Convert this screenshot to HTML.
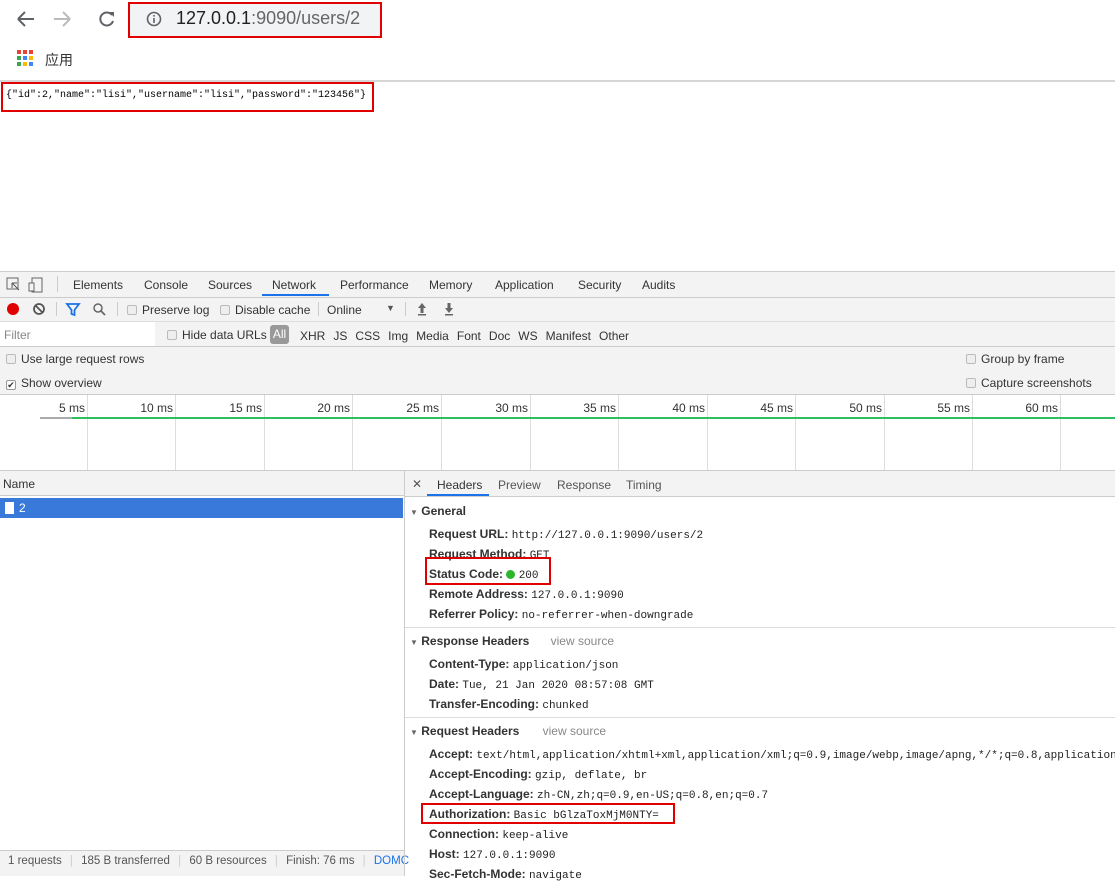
<!DOCTYPE html>
<html><head><meta charset="utf-8"><style>
*{margin:0;padding:0;box-sizing:border-box}
body{width:1115px;height:876px;overflow:hidden;background:#fff;font-family:"Liberation Sans","Noto Sans CJK SC",sans-serif;font-size:12px;color:#333;position:relative}
.a{position:absolute;white-space:nowrap}
.m{font-family:"Liberation Mono",monospace;font-size:11px;color:#222}
.b{font-weight:bold;color:#333}
.hl{border:2px solid #e00000}
.cb{display:inline-block;width:10px;height:10px;border:1px solid #bbb;background:#eee;border-radius:2px;vertical-align:-1px;margin-right:5px}
.vl{position:absolute;width:1px;background:#ddd}
.hr{position:absolute;height:1px;background:#ccc}
</style></head><body>
<svg class="a" style="left:14px;top:9px" width="110" height="20" viewBox="0 0 110 20">
<path d="M4 10H20M4 10L11 3M4 10L11 17" stroke="#5f6368" stroke-width="2" fill="none"/>
<path d="M56 10H40M56 10L49 3M56 10L49 17" stroke="#bbb" stroke-width="2" fill="none"/>
<path d="M98 6A6.5 6.5 0 1 0 99 12" stroke="#5f6368" stroke-width="2" fill="none"/><path d="M95 3L100 3L100 8Z" fill="#5f6368"/>
</svg>
<div class="a hl" style="left:128px;top:2px;width:254px;height:36px;background:#f1f3f4"></div>
<svg class="a" style="left:146px;top:11px" width="16" height="16"><circle cx="8" cy="8" r="6.5" stroke="#5f6368" stroke-width="1.6" fill="none"/><rect x="7.2" y="7" width="1.6" height="5" fill="#5f6368"/><rect x="7.2" y="4" width="1.6" height="1.6" fill="#5f6368"/></svg>
<div class="a" style="left:176px;top:8px;font-size:18px;color:#202124">127.0.0.1<span style="color:#666">:9090/users/2</span></div>
<svg class="a" style="left:17px;top:50px" width="18" height="18">
<rect x="0" y="0" width="4" height="4" fill="#e94235"/><rect x="6" y="0" width="4" height="4" fill="#e94235"/><rect x="12" y="0" width="4" height="4" fill="#e94235"/>
<rect x="0" y="6" width="4" height="4" fill="#34a853"/><rect x="6" y="6" width="4" height="4" fill="#4285f4"/><rect x="12" y="6" width="4" height="4" fill="#fbbc04"/>
<rect x="0" y="12" width="4" height="4" fill="#34a853"/><rect x="6" y="12" width="4" height="4" fill="#fbbc04"/><rect x="12" y="12" width="4" height="4" fill="#4285f4"/></svg>
<div class="a" style="left:45px;top:50px;font-size:14px;color:#333">应用</div>
<div class="hr" style="left:0;top:80px;width:1115px;background:#d6d6d6;height:2px"></div>
<div class="a hl" style="left:1px;top:82px;width:373px;height:30px"></div>
<div class="a m" style="left:6px;top:90px;font-size:10px;color:#000">{"id":2,"name":"lisi","username":"lisi","password":"123456"}</div>

<div class="a" style="left:0;top:271px;width:1115px;height:124px;background:#f3f3f3;border-top:1px solid #ccc"></div>
<div class="hr" style="left:0;top:297px;width:1115px"></div>
<div class="hr" style="left:0;top:321px;width:1115px;background:#ddd"></div>
<div class="hr" style="left:0;top:346px;width:1115px"></div>
<div class="hr" style="left:0;top:394px;width:1115px"></div>
<svg class="a" style="left:6px;top:277px" width="42" height="16"><rect x="1" y="1" width="11" height="11" fill="none" stroke="#666"/><path d="M6 6L13 13M6 6L6 11M6 6L11 6" stroke="#555" fill="none"/><rect x="26" y="1" width="10" height="14" fill="none" stroke="#666"/><rect x="23" y="6" width="5" height="8" fill="#f3f3f3" stroke="#666"/></svg>
<div class="vl" style="left:57px;top:276px;height:16px;background:#ccc"></div>
<div class="a" style="left:73px;top:278px;color:#333">Elements</div>
<div class="a" style="left:144px;top:278px;color:#333">Console</div>
<div class="a" style="left:208px;top:278px;color:#333">Sources</div>
<div class="a" style="left:272px;top:278px;color:#333">Network</div>
<div class="a" style="left:262px;top:294px;width:67px;height:2px;background:#1a73e8"></div>
<div class="a" style="left:340px;top:278px;color:#333">Performance</div>
<div class="a" style="left:429px;top:278px;color:#333">Memory</div>
<div class="a" style="left:495px;top:278px;color:#333">Application</div>
<div class="a" style="left:578px;top:278px;color:#333">Security</div>
<div class="a" style="left:642px;top:278px;color:#333">Audits</div>
<svg class="a" style="left:5px;top:302px" width="110" height="16"><circle cx="8" cy="7" r="6" fill="#e10000"/><circle cx="34" cy="7" r="5" stroke="#555" stroke-width="1.8" fill="none"/><path d="M30.5 3.5L37.5 10.5" stroke="#555" stroke-width="1.8"/><path d="M62 2H74L69.5 8V13L66.5 12V8Z" fill="none" stroke="#1a73e8" stroke-width="1.8"/><circle cx="93" cy="6" r="4" stroke="#666" stroke-width="1.5" fill="none"/><path d="M96 9L100 13" stroke="#666" stroke-width="1.8"/></svg>
<div class="vl" style="left:56px;top:302px;height:14px;background:#ccc"></div>
<div class="vl" style="left:117px;top:302px;height:14px;background:#ccc"></div>
<div class="a" style="left:127px;top:303px;color:#333;font-size:12px"><span class="cb"></span>Preserve log</div>
<div class="a" style="left:220px;top:303px;color:#333;font-size:12px"><span class="cb"></span>Disable cache</div>
<div class="vl" style="left:318px;top:302px;height:14px;background:#ccc"></div>
<div class="a" style="left:327px;top:303px;color:#333">Online</div>
<div class="a" style="left:386px;top:303px;color:#555;font-size:9px">▼</div>
<div class="vl" style="left:405px;top:302px;height:14px;background:#ccc"></div>
<svg class="a" style="left:415px;top:302px" width="40" height="14"><path d="M7 1L3 6H5.5V11H8.5V6H11Z" fill="#666"/><rect x="3" y="12" width="8" height="1.5" fill="#666"/><path d="M34 11L30 6H32.5V1H35.5V6H38Z" fill="#666"/><rect x="30" y="12" width="8" height="1.5" fill="#666"/></svg>
<div class="a" style="left:0;top:322px;width:155px;height:24px;background:#fff"></div>
<div class="a" style="left:4px;top:328px;color:#888">Filter</div>
<div class="a" style="left:167px;top:328px;color:#333;font-size:12px"><span class="cb"></span>Hide data URLs</div>
<div class="a" style="left:270px;top:325px;width:19px;height:19px;background:#999;border-radius:3px;color:#fff;text-align:center;line-height:19px">All</div>
<div class="a" style="left:300px;top:329px;color:#333;word-spacing:4.7px;font-size:12px">XHR JS CSS Img Media Font Doc WS Manifest Other</div>
<div class="a" style="left:6px;top:352px;color:#333"><span class="cb"></span>Use large request rows</div>
<div class="a" style="left:6px;top:376px;color:#333"><span class="cb" style="background:#fff;border-color:#999;font-size:9px;line-height:8px;text-align:center">✔</span>Show overview</div>
<div class="a" style="left:966px;top:352px;color:#333"><span class="cb"></span>Group by frame</div>
<div class="a" style="left:966px;top:376px;color:#333"><span class="cb"></span>Capture screenshots</div>
<div class="a" style="left:0;top:395px;width:1115px;height:76px;background:#fff"></div>
<div class="vl" style="left:87px;top:395px;height:75px"></div><div class="vl" style="left:175px;top:395px;height:75px"></div><div class="vl" style="left:264px;top:395px;height:75px"></div><div class="vl" style="left:352px;top:395px;height:75px"></div><div class="vl" style="left:441px;top:395px;height:75px"></div><div class="vl" style="left:530px;top:395px;height:75px"></div><div class="vl" style="left:618px;top:395px;height:75px"></div><div class="vl" style="left:707px;top:395px;height:75px"></div><div class="vl" style="left:795px;top:395px;height:75px"></div><div class="vl" style="left:884px;top:395px;height:75px"></div><div class="vl" style="left:972px;top:395px;height:75px"></div><div class="vl" style="left:1060px;top:395px;height:75px"></div>
<div class="a" style="left:41px;top:401px;color:#333;width:44px;text-align:right">5 ms</div>
<div class="a" style="left:129px;top:401px;color:#333;width:44px;text-align:right">10 ms</div>
<div class="a" style="left:218px;top:401px;color:#333;width:44px;text-align:right">15 ms</div>
<div class="a" style="left:306px;top:401px;color:#333;width:44px;text-align:right">20 ms</div>
<div class="a" style="left:395px;top:401px;color:#333;width:44px;text-align:right">25 ms</div>
<div class="a" style="left:484px;top:401px;color:#333;width:44px;text-align:right">30 ms</div>
<div class="a" style="left:572px;top:401px;color:#333;width:44px;text-align:right">35 ms</div>
<div class="a" style="left:661px;top:401px;color:#333;width:44px;text-align:right">40 ms</div>
<div class="a" style="left:749px;top:401px;color:#333;width:44px;text-align:right">45 ms</div>
<div class="a" style="left:838px;top:401px;color:#333;width:44px;text-align:right">50 ms</div>
<div class="a" style="left:926px;top:401px;color:#333;width:44px;text-align:right">55 ms</div>
<div class="a" style="left:1014px;top:401px;color:#333;width:44px;text-align:right">60 ms</div>
<div class="a" style="left:40px;top:417px;width:32px;height:2px;background:#aaa"></div>
<div class="a" style="left:72px;top:417px;width:1043px;height:2px;background:#2fbf5f"></div>
<div class="hr" style="left:0;top:470px;width:1115px"></div>
<div class="a" style="left:0;top:471px;width:404px;height:25px;background:#f3f3f3;border-bottom:1px solid #ccc"></div>
<div class="a" style="left:3px;top:477px;color:#333">Name</div>
<div class="a" style="left:0;top:498px;width:403px;height:20px;background:#3879d9"></div>
<div class="a" style="left:5px;top:502px;width:9px;height:12px;background:#fff"></div>
<div class="a" style="left:19px;top:501px;color:#fff">2</div>
<div class="a" style="left:0;top:850px;width:404px;height:26px;background:#f3f3f3;border-top:1px solid #ccc"></div>
<div class="a" style="left:8px;top:855px;color:#555;font-size:11.5px">1 requests <span style="color:#ccc;margin:0 5px">|</span> 185 B transferred <span style="color:#ccc;margin:0 5px">|</span> 60 B resources <span style="color:#ccc;margin:0 5px">|</span> Finish: 76 ms <span style="color:#ccc;margin:0 5px">|</span> <span style="color:#1a73e8">DOMC</span></div>
<div class="vl" style="left:404px;top:471px;height:405px;background:#ccc"></div>
<div class="a" style="left:405px;top:471px;width:710px;height:26px;background:#f3f3f3;border-bottom:1px solid #ccc"></div>
<div class="a" style="left:412px;top:477px;color:#555">✕</div>
<div class="a" style="left:437px;top:478px;color:#333">Headers</div>
<div class="a" style="left:427px;top:494px;width:62px;height:2px;background:#1a73e8"></div>
<div class="a" style="left:498px;top:478px;color:#555">Preview</div>
<div class="a" style="left:557px;top:478px;color:#555">Response</div>
<div class="a" style="left:626px;top:478px;color:#555">Timing</div>

<div class="a b" style="left:410px;top:504px"><span style="font-size:8px;color:#666">▼</span> General</div>
<div class="a" style="left:429px;top:527px"><span class="b">Request URL:</span> <span class="m">http://127.0.0.1:9090/users/2</span></div>
<div class="a" style="left:429px;top:547px"><span class="b">Request Method:</span> <span class="m">GET</span></div>
<div class="a" style="left:429px;top:567px;background:#fff;width:118px;height:16px"></div>
<div class="a" style="left:429px;top:567px"><span class="b">Status Code:</span> <span style="display:inline-block;width:9px;height:9px;border-radius:50%;background:#2db52d;vertical-align:-1px"></span> <span class="m">200</span></div>
<div class="a hl" style="left:425px;top:557px;width:126px;height:28px"></div>
<div class="a" style="left:429px;top:587px"><span class="b">Remote Address:</span> <span class="m">127.0.0.1:9090</span></div>
<div class="a" style="left:429px;top:607px"><span class="b">Referrer Policy:</span> <span class="m">no-referrer-when-downgrade</span></div>
<div class="hr" style="left:405px;top:627px;width:710px;background:#ddd"></div>
<div class="a b" style="left:410px;top:634px"><span style="font-size:8px;color:#666">▼</span> Response Headers <span style="font-weight:normal;color:#888;margin-left:18px">view source</span></div>
<div class="a" style="left:429px;top:657px"><span class="b">Content-Type:</span> <span class="m">application/json</span></div>
<div class="a" style="left:429px;top:677px"><span class="b">Date:</span> <span class="m">Tue, 21 Jan 2020 08:57:08 GMT</span></div>
<div class="a" style="left:429px;top:697px"><span class="b">Transfer-Encoding:</span> <span class="m">chunked</span></div>
<div class="hr" style="left:405px;top:717px;width:710px;background:#ddd"></div>
<div class="a b" style="left:410px;top:724px"><span style="font-size:8px;color:#666">▼</span> Request Headers <span style="font-weight:normal;color:#888;margin-left:20px">view source</span></div>
<div class="a" style="left:429px;top:747px"><span class="b">Accept:</span> <span class="m">text/html,application/xhtml+xml,application/xml;q=0.9,image/webp,image/apng,*/*;q=0.8,application</span></div>
<div class="a" style="left:429px;top:767px"><span class="b">Accept-Encoding:</span> <span class="m">gzip, deflate, br</span></div>
<div class="a" style="left:429px;top:787px"><span class="b">Accept-Language:</span> <span class="m">zh-CN,zh;q=0.9,en-US;q=0.8,en;q=0.7</span></div>
<div class="a" style="left:429px;top:807px"><span class="b">Authorization:</span> <span class="m">Basic bGlzaToxMjM0NTY=</span></div>
<div class="a hl" style="left:421px;top:803px;width:254px;height:21px"></div>
<div class="a" style="left:429px;top:827px"><span class="b">Connection:</span> <span class="m">keep-alive</span></div>
<div class="a" style="left:429px;top:847px"><span class="b">Host:</span> <span class="m">127.0.0.1:9090</span></div>
<div class="a" style="left:429px;top:867px"><span class="b">Sec-Fetch-Mode:</span> <span class="m">navigate</span></div>
</body></html>
